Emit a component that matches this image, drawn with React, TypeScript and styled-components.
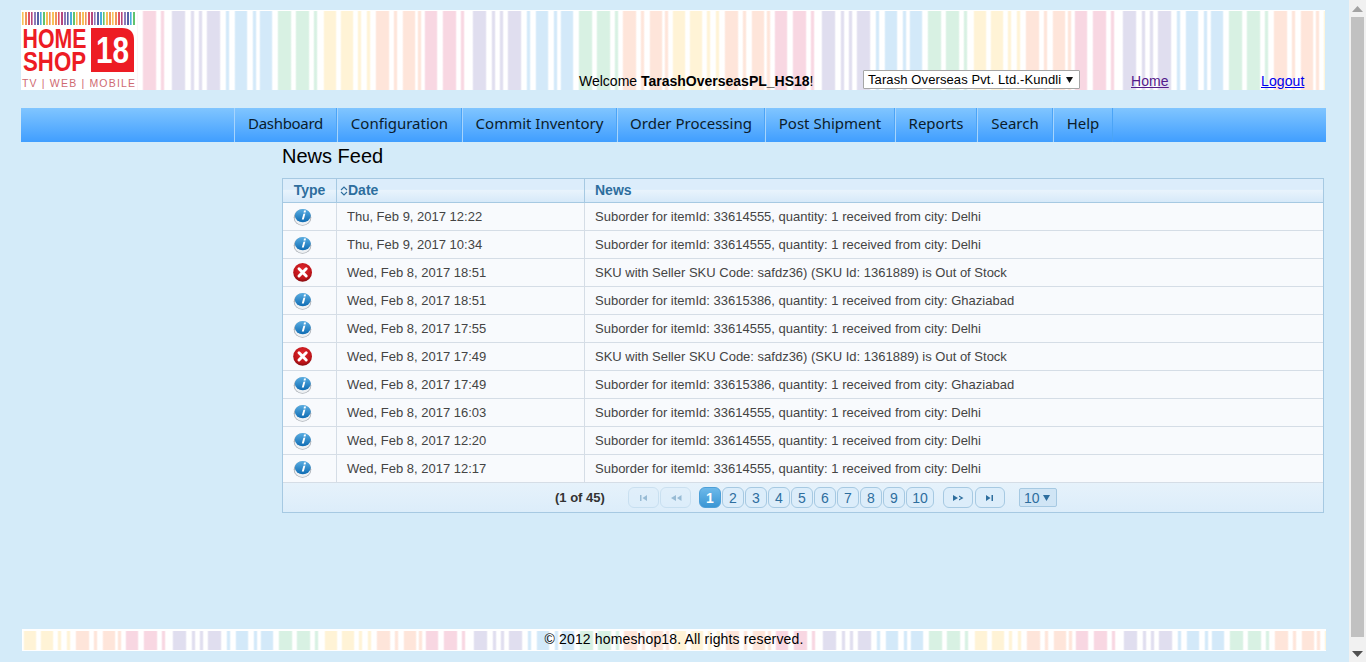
import React from 'react';
import styled, { createGlobalStyle } from 'styled-components';

const GlobalStyle = createGlobalStyle`
  html,
  body {
    margin: 0;
    padding: 0;
    height: 100%;
    overflow: hidden;
    background: #d4ebf9;
    font-family: 'Liberation Sans', Arial, sans-serif;
  }
`;

// ---- stripe banner shared by header and footer ----
const PALETTE = {
  pink: '#f8d7e2',
  lav: '#e0deef',
  blue: '#d3e9f9',
  green: '#d8f1e3',
  yellow: '#fff3d6',
  peach: '#fee5da',
};
type Tone = keyof typeof PALETTE;

const GROUPS: Record<Tone, [number, number][]> = {
  yellow: [[0, 12], [17, 12], [34, 3], [43, 3]],
  peach: [[0, 13], [18, 3], [27, 12], [42, 3]],
  pink: [[0, 12], [18, 13], [36, 3]],
  lav: [[0, 13], [19, 3], [27, 3], [35, 13]],
  blue: [[0, 3], [9, 12], [27, 3], [34, 12]],
  green: [[0, 13], [18, 13], [36, 3]],
};

const SEQUENCE: [Tone, number][] = [
  ['yellow', 2], ['peach', 54], ['pink', 104], ['lav', 151], ['blue', 205], ['green', 257],
  ['yellow', 303], ['peach', 355], ['pink', 404], ['lav', 452], ['blue', 506], ['green', 558],
  ['peach', 602], ['yellow', 652], ['peach', 704], ['pink', 754], ['lav', 801], ['blue', 855],
  ['green', 907], ['yellow', 953], ['peach', 1005], ['pink', 1054], ['lav', 1102], ['blue', 1156],
  ['green', 1208], ['peach', 1253], ['yellow', 1303],
];

const stripes = (() => {
  const stops: string[] = ['#fff 0px'];
  SEQUENCE.forEach(([tone, start]) => {
    GROUPS[tone].forEach(([offset, width]) => {
      const a = start + offset;
      const c = PALETTE[tone];
      stops.push(`#fff ${a - 1}px`, `${c} ${a + 0.8}px`, `${c} ${a + width - 0.8}px`, `#fff ${a + width + 1}px`);
    });
  });
  return `linear-gradient(90deg, ${stops.join(', ')})`;
})();

// ---- page shell ----
const Shell = styled.div`
  display: flex;
  width: 1366px;
  height: 662px;
  overflow: hidden;
`;

const Page = styled.div`
  flex: 1;
  min-width: 0;
  display: flex;
  flex-direction: column;
  padding: 10px 23px 11px 21px;
  box-sizing: border-box;
`;

const ScrollRail = styled.div`
  width: 17px;
  flex: none;
  display: flex;
  flex-direction: column;
  background: #f1f1f1;
`;

const ScrollArrow = styled.div`
  height: 17px;
  flex: none;
  display: flex;
  align-items: center;
  justify-content: center;
`;

const ScrollThumb = styled.div`
  flex: 1;
  margin: 0 2px 8px;
  background: #c1c1c1;
`;

// ---- header ----
const Banner = styled.header`
  flex: none;
  width: 1304px;
  height: 80px;
  box-sizing: border-box;
  border-top: 1px solid #fff;
  background: ${stripes};
  display: grid;
  grid-template-columns: 558px 284px 268px 130px 1fr;
  align-items: end;
  position: relative;
`;

const LogoBox = styled.a`
  position: absolute;
  left: 0;
  top: -1px;
  width: 116px;
  height: 80px;
  background: #fff;
  display: block;
`;

const Welcome = styled.div`
  font-size: 14px;
  line-height: 16px;
  color: #000;
  height: 17px;
  white-space: nowrap;
`;

const CompanySelect = styled.div`
  width: 217px;
  height: 19px;
  box-sizing: border-box;
  border: 1px solid #a6a6a6;
  border-radius: 1px;
  background: #fff;
  margin-bottom: 1px;
  padding: 0 6px 0 4px;
  display: flex;
  align-items: center;
  justify-content: space-between;
  font-size: 13px;
  letter-spacing: 0.1px;
  color: #000;
  white-space: nowrap;
`;

const HeaderLink = styled.a<{ $visited?: boolean }>`
  font-size: 14px;
  line-height: 16px;
  height: 16px;
  margin-bottom: 1px;
  letter-spacing: 0.1px;
  color: ${({ $visited }) => ($visited ? '#551a8b' : '#0000ee')};
  text-decoration: underline;
  justify-self: start;
`;

// ---- nav ----
const NavBar = styled.nav`
  flex: none;
  width: 1305px;
  height: 34px;
  margin-top: 18px;
  display: flex;
  justify-content: center;
  background: linear-gradient(180deg, #80c5ff 0%, #409eff 100%);
`;

const NavItem = styled.a<{ $w: number }>`
  flex: none;
  width: ${({ $w }) => $w}px;
  box-sizing: border-box;
  padding-bottom: 4px;
  display: flex;
  align-items: center;
  justify-content: center;
  font-family: 'Noto Sans', 'Open Sans', sans-serif;
  font-size: 15px;
  color: #0b1c2b;
  border-left: 1px solid #a6d4fd;
  border-right: 1px solid #4ba4f6;
  white-space: nowrap;
`;

const NavLabel = styled.span<{ $tight?: boolean }>`
  letter-spacing: ${({ $tight }) => ($tight ? '-0.3px' : '0')};
`;

// ---- content ----
const Content = styled.main`
  flex: 1;
  margin-left: 261px;
  width: 1042px;
`;

const Title = styled.h1`
  margin: 0;
  padding-top: 3px;
  height: 33px;
  box-sizing: border-box;
  font-size: 20px;
  line-height: 23px;
  font-weight: 400;
  color: #000;
`;

const Panel = styled.section`
  margin-top: 3px;
  border: 1px solid #a6c9e2;
`;

const Table = styled.table`
  width: 100%;
  border-collapse: separate;
  border-spacing: 0;
  table-layout: fixed;
`;

const HeadCell = styled.th<{ $center?: boolean }>`
  height: 24px;
  padding: 0 0 2px ${({ $center }) => ($center ? '0' : '10px')};
  box-sizing: border-box;
  border-right: 1px solid #a6c9e2;
  border-bottom: 1px solid #a6c9e2;
  background: linear-gradient(180deg, #dcedfb 0%, #dcedfb 45%, #e8f3fc 50%, #d6e9f9 100%);
  color: #2e6e9e;
  font-size: 14px;
  font-weight: 700;
  text-align: ${({ $center }) => ($center ? 'center' : 'left')};
  white-space: nowrap;

  &:last-child {
    border-right: 0;
  }
`;

const DateHead = styled(HeadCell)`
  padding-left: 3px;
`;

const SortMark = styled.svg`
  width: 8px;
  height: 10px;
  vertical-align: -1px;
`;

const Cell = styled.td`
  height: 28px;
  padding: 0 0 0 10px;
  box-sizing: border-box;
  background: #f8fafd;
  border-right: 1px solid #d5dde6;
  border-bottom: 1px solid #d5dde6;
  color: #444;
  font-size: 13px;
  white-space: nowrap;

  &:last-child {
    border-right: 0;
  }
`;

const IconCell = styled(Cell)`
  line-height: 0;
`;

const Pager = styled.div`
  height: 29px;
  box-sizing: border-box;
  display: flex;
  align-items: center;
  padding: 0 0 0 272px;
  background: linear-gradient(180deg, #e6f2fb 0%, #dcedfa 100%);
`;

const PageReport = styled.span`
  width: 73px;
  font-size: 13px;
  font-weight: 700;
  color: #333;
  flex: none;
`;

const PagerButton = styled.a<{ $active?: boolean; $off?: boolean; $w: number; $mr: number }>`
  flex: none;
  width: ${({ $w }) => $w}px;
  height: 21px;
  margin-right: ${({ $mr }) => $mr}px;
  box-sizing: border-box;
  display: flex;
  align-items: center;
  justify-content: center;
  border-radius: 6px;
  border: 1px solid ${({ $active }) => ($active ? '#4c9fd8' : '#a6c9e2')};
  background: ${({ $active }) => ($active ? 'linear-gradient(180deg, #6db9ea 0%, #3a96d4 100%)' : '#dcedfa')};
  color: ${({ $active }) => ($active ? '#fff' : '#2e6e9e')};
  font-size: 14px;
  font-weight: ${({ $active }) => ($active ? 700 : 400)};
  opacity: ${({ $off }) => ($off ? 0.4 : 1)};
`;

const PageSize = styled.div`
  flex: none;
  width: 38px;
  height: 19px;
  box-sizing: border-box;
  display: flex;
  align-items: center;
  justify-content: space-between;
  padding: 0 6px 0 4px;
  border: 1px solid #a6c9e2;
  border-radius: 2px;
  background: #d0e5f5;
  color: #2e6e9e;
  font-size: 14px;
`;

const Footer = styled.footer`
  flex: none;
  margin-left: 1px;
  width: 1304px;
  height: 22px;
  box-sizing: border-box;
  border-top: 2px solid #fff;
  border-bottom: 1px solid #fff;
  padding-bottom: 3px;
  background: ${stripes};
  display: flex;
  align-items: center;
  justify-content: center;
  font-size: 14px;
  letter-spacing: 0.15px;
  color: #000;
`;

// ---- drawings ----
const Logo = () => {
  const colors = ['#f6b12d', '#ee7b30', '#d7263d', '#a4195f', '#6f5aa8', '#2b3990', '#1c9ad6', '#39b54a', '#f6b12d', '#ee7b30'];
  const bars = Array.from({ length: 38 }, (_, i) => i);
  return (
    <svg width="116" height="80" viewBox="0 0 116 80">
      {bars.map(i => (
        <rect key={i} x={1 + i * 3} y={2} width={i % 3 === 0 ? 1.6 : 2} height={13} fill={colors[i % colors.length]} opacity={0.8} />
      ))}
      <text x="1.5" y="38" fontFamily="'Liberation Sans', sans-serif" fontWeight="700" fontSize="28" fill="#ed1c24" textLength="64" lengthAdjust="spacingAndGlyphs">
        HOME
      </text>
      <text x="2" y="60.5" fontFamily="'Liberation Sans', sans-serif" fontWeight="700" fontSize="28" fill="#ed1c24" textLength="63" lengthAdjust="spacingAndGlyphs">
        SHOP
      </text>
      <path d="M70 18H101Q113 18 113 30V62H70Z" fill="#ed1c24" />
      <text x="75" y="53" fontFamily="'Liberation Sans', sans-serif" fontWeight="700" fontSize="36" fill="#fff" textLength="33" lengthAdjust="spacingAndGlyphs">
        18
      </text>
      <text x="1" y="76.5" fontFamily="'Liberation Sans', sans-serif" fontSize="10.5" fill="#cf6a72" textLength="113" lengthAdjust="spacing">
        TV | WEB | MOBILE
      </text>
    </svg>
  );
};

const InfoIcon = () => (
  <svg width="20" height="20" viewBox="0 0 20 20">
    <defs>
      <linearGradient id="infoFill" x1="0" y1="0" x2="0" y2="1">
        <stop offset="0" stopColor="#5aaee3" />
        <stop offset="1" stopColor="#0f6cb3" />
      </linearGradient>
    </defs>
    <ellipse cx="9.5" cy="10.5" rx="8.8" ry="8.2" fill="#a9aeb4" />
    <ellipse cx="9.5" cy="11.5" rx="7.8" ry="6.4" fill="#eef1f4" />
    <ellipse cx="9.8" cy="8.6" rx="8" ry="6.6" fill="url(#infoFill)" />
    <path d="M10.4 6.8l2-.4-1.6 6.2h-2zM11 3.6h2l-.4 2h-2z" fill="#fff" />
  </svg>
);

const ErrorIcon = () => (
  <svg width="20" height="20" viewBox="0 0 20 20">
    <defs>
      <radialGradient id="errFill" cx="0.5" cy="0.35" r="0.7">
        <stop offset="0" stopColor="#e22a30" />
        <stop offset="0.7" stopColor="#bc1318" />
        <stop offset="1" stopColor="#720a0e" />
      </radialGradient>
    </defs>
    <circle cx="9.6" cy="9.4" r="9.4" fill="url(#errFill)" />
    <path d="M6 5.8l7.2 7.2M13.2 5.8L6 13" stroke="#fff" strokeWidth="3" strokeLinecap="round" />
  </svg>
);

type Seek = 'first' | 'prev' | 'next' | 'last';
const SeekIcon = ({ kind }: { kind: Seek }) => {
  const paths: Record<Seek, string> = {
    first: 'M2 1h1.5v6H2zM9 1v6L4.5 4z',
    prev: 'M6 1v6L1 4zM11.5 1v6L7 4z',
    next: 'M1 1l5 3-5 3zM7 1.6L11.5 4 7 6.4V5.2L9 4 7 2.8z',
    last: 'M2 1l4.5 3L2 7zM7.5 1H9v6H7.5z',
  };
  return (
    <svg width="12" height="8" viewBox="0 0 12 8">
      <path d={paths[kind]} fill="#2e6e9e" />
    </svg>
  );
};

const Caret = ({ color, w = 7, h = 6 }: { color: string; w?: number; h?: number }) => (
  <svg width={w} height={h} viewBox="0 0 9 7" preserveAspectRatio="none">
    <path d="M0 0h9L4.5 7z" fill={color} />
  </svg>
);

// ---- data ----
const SUBORDER_DELHI = 'Suborder for itemId: 33614555, quantity: 1 received from city: Delhi';
const SUBORDER_GZB = 'Suborder for itemId: 33615386, quantity: 1 received from city: Ghaziabad';
const OUT_OF_STOCK = 'SKU with Seller SKU Code: safdz36) (SKU Id: 1361889) is Out of Stock';

const NEWS: { type: 'info' | 'error'; date: string; text: string }[] = [
  { type: 'info', date: 'Thu, Feb 9, 2017 12:22', text: SUBORDER_DELHI },
  { type: 'info', date: 'Thu, Feb 9, 2017 10:34', text: SUBORDER_DELHI },
  { type: 'error', date: 'Wed, Feb 8, 2017 18:51', text: OUT_OF_STOCK },
  { type: 'info', date: 'Wed, Feb 8, 2017 18:51', text: SUBORDER_GZB },
  { type: 'info', date: 'Wed, Feb 8, 2017 17:55', text: SUBORDER_DELHI },
  { type: 'error', date: 'Wed, Feb 8, 2017 17:49', text: OUT_OF_STOCK },
  { type: 'info', date: 'Wed, Feb 8, 2017 17:49', text: SUBORDER_GZB },
  { type: 'info', date: 'Wed, Feb 8, 2017 16:03', text: SUBORDER_DELHI },
  { type: 'info', date: 'Wed, Feb 8, 2017 12:20', text: SUBORDER_DELHI },
  { type: 'info', date: 'Wed, Feb 8, 2017 12:17', text: SUBORDER_DELHI },
];

const NAV: { label: string; width: number }[] = [
  { label: 'Dashboard', width: 103 },
  { label: 'Configuration', width: 125 },
  { label: 'Commit Inventory', width: 155 },
  { label: 'Order Processing', width: 148 },
  { label: 'Post Shipment', width: 130 },
  { label: 'Reports', width: 82 },
  { label: 'Search', width: 76 },
  { label: 'Help', width: 60 },
];

export default function App() {
  return (
    <Shell>
      <GlobalStyle />
      <Page>
        <Banner>
          <LogoBox>
            <Logo />
          </LogoBox>
          <div />
          <Welcome>
            Welcome <b>TarashOverseasPL_HS18</b>!
          </Welcome>
          <CompanySelect>
            Tarash Overseas Pvt. Ltd.-Kundli
            <Caret color="#111" />
          </CompanySelect>
          <HeaderLink $visited>Home</HeaderLink>
          <HeaderLink>Logout</HeaderLink>
        </Banner>

        <NavBar>
          {NAV.map(item => (
            <NavItem key={item.label} $w={item.width}>
              <NavLabel $tight={item.label === 'Dashboard'}>{item.label}</NavLabel>
            </NavItem>
          ))}
        </NavBar>

        <Content>
          <Title>News Feed</Title>
          <Panel>
            <Table>
              <colgroup>
                <col width="54" />
                <col width="248" />
                <col />
              </colgroup>
              <thead>
                <tr>
                  <HeadCell $center>Type</HeadCell>
                  <DateHead>
                    <SortMark viewBox="0 0 8 10">
                      <path d="M1 4l3-3 3 3M1 6l3 3 3-3" fill="none" stroke="#2e6e9e" strokeWidth="1.1" />
                    </SortMark>
                    Date
                  </DateHead>
                  <HeadCell>News</HeadCell>
                </tr>
              </thead>
              <tbody>
                {NEWS.map((row, i) => (
                  <tr key={i}>
                    <IconCell>{row.type === 'info' ? <InfoIcon /> : <ErrorIcon />}</IconCell>
                    <Cell>{row.date}</Cell>
                    <Cell>{row.text}</Cell>
                  </tr>
                ))}
              </tbody>
            </Table>
            <Pager>
              <PageReport>(1 of 45)</PageReport>
              <PagerButton $off $w={31} $mr={1}>
                <SeekIcon kind="first" />
              </PagerButton>
              <PagerButton $off $w={31} $mr={8}>
                <SeekIcon kind="prev" />
              </PagerButton>
              {[1, 2, 3, 4, 5, 6, 7, 8, 9].map(n => (
                <PagerButton key={n} $active={n === 1} $w={22} $mr={1}>
                  {n}
                </PagerButton>
              ))}
              <PagerButton $w={28} $mr={9}>
                10
              </PagerButton>
              <PagerButton $w={30} $mr={2}>
                <SeekIcon kind="next" />
              </PagerButton>
              <PagerButton $w={30} $mr={14}>
                <SeekIcon kind="last" />
              </PagerButton>
              <PageSize>
                10
                <Caret color="#2e6e9e" />
              </PageSize>
            </Pager>
          </Panel>
        </Content>

        <Footer>© 2012 homeshop18. All rights reserved.</Footer>
      </Page>
      <ScrollRail>
        <ScrollArrow>
          <svg width="11" height="6" viewBox="0 0 11 6">
            <path d="M5.5 0L11 6H0z" fill="#a3a3a3" />
          </svg>
        </ScrollArrow>
        <ScrollThumb />
        <ScrollArrow>
          <svg width="11" height="6" viewBox="0 0 11 6">
            <path d="M0 0h11L5.5 6z" fill="#505050" />
          </svg>
        </ScrollArrow>
      </ScrollRail>
    </Shell>
  );
}
